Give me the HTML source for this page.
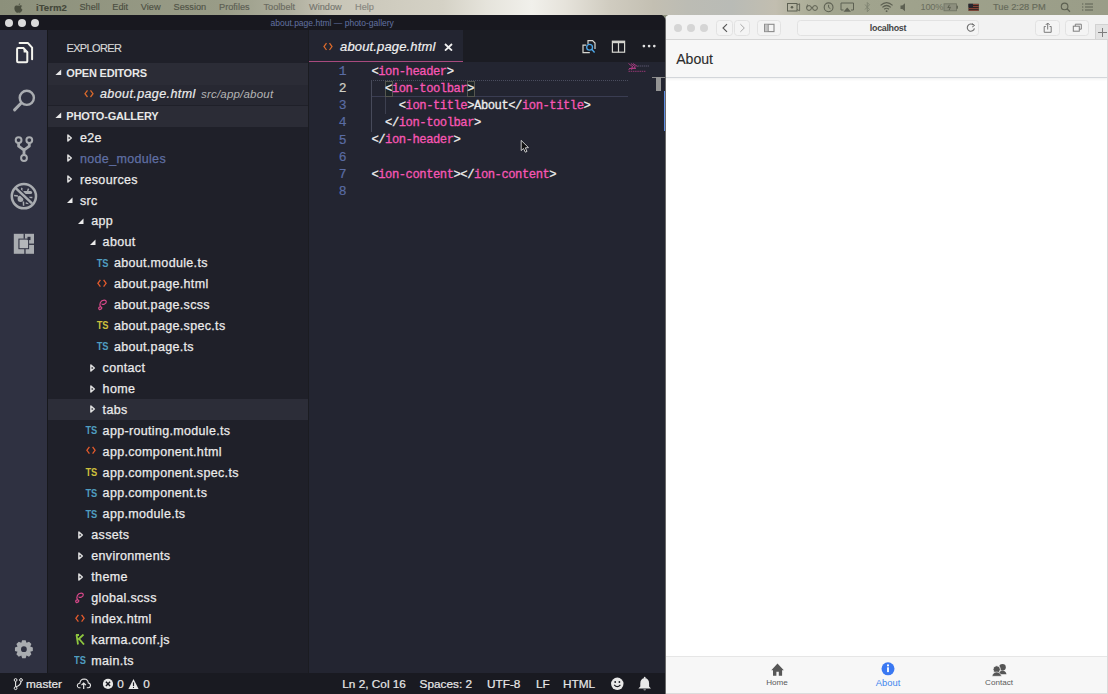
<!DOCTYPE html>
<html><head><meta charset="utf-8"><style>
*{margin:0;padding:0;box-sizing:border-box}
html,body{width:1108px;height:694px;overflow:hidden;background:#8e927f;font-family:"Liberation Sans",sans-serif}
.a{position:absolute}
#menubar{left:0;top:0;width:1108px;height:15px;background:linear-gradient(90deg,#8c907b 0%,#999c87 20%,#aeae9d 26%,#c8c5b7 30%,#d5d2c6 40%,#e6e4dc 44%,#f1f0eb 48%,#e6e3db 51%,#d0ccc0 55%,#c3bfb2 59%,#bcbcb4 62%,#b9bbb6 66%,#c2beb0 70%,#b2b29e 72%,#a2a58f 75%,#9ea18b 85%,#9a9d88 100%)}
#menubar span{position:absolute;top:1px;font-size:10px;color:#5b5e50;line-height:13px;-webkit-text-stroke:0.15px currentColor}
#vsc{left:0;top:15px;width:665px;height:679px;background:#1a1b22;border-top-right-radius:5px;overflow:hidden}
#title{left:0;top:15px;width:665px;height:15px;background:#18181f;border-top-right-radius:5px}
.tl{position:absolute;top:18.5px;width:8px;height:8px;border-radius:50%;background:#dadada}
#title .t{position:absolute;left:270.5px;top:2.3px;font-size:8.5px;color:#6272a2;line-height:12px;white-space:nowrap}
#act{left:0;top:30px;width:47px;height:643px;background:#2f3141}
#side{left:47px;top:30px;width:262px;height:643px;background:#1f2029}
#tabs{left:309px;top:30px;width:356px;height:32px;background:#1b1c23}
#editor{left:309px;top:62px;width:356px;height:611px;background:#232531}
#status{left:0;top:673px;width:665px;height:21px;background:#191a21}
.st{position:absolute;top:677px;line-height:14px;white-space:nowrap;color:#e8e8e8;font-size:11.8px;-webkit-text-stroke:0.2px currentColor}
#saf{left:665px;top:15px;width:443px;height:679px;background:#fff;border-top-left-radius:5px;overflow:hidden}
.row{position:absolute;left:47px;width:261px;height:21px}
.row.sel{background:#2c2d38}
.row .nm{position:absolute;top:3.8px;line-height:15px;font-size:12.5px;letter-spacing:0.33px;color:#ebebeb;white-space:nowrap;-webkit-text-stroke:0.25px currentColor}
.row .tw{position:absolute;top:6.5px}
.row .ts{position:absolute;top:6px;font-size:9.3px;font-weight:bold;line-height:11px;letter-spacing:-0.1px;transform:scaleY(1.18);transform-origin:0 50%}
.row .ic{position:absolute;top:5.5px}
.hdr{position:absolute;left:47px;width:261px;height:22px;background:#2b2c36}
.hdr b{position:absolute;left:19.3px;top:4px;font-size:11px;line-height:13px;color:#e8e8e8;letter-spacing:-0.2px}
.hdr svg{position:absolute;left:7.6px;top:6.3px}
.ln{position:absolute;left:308px;width:38.5px;text-align:right;height:17px;line-height:17px;font-family:"Liberation Mono",monospace;font-size:13px;-webkit-text-stroke:0.2px currentColor}
.code{position:absolute;left:371.4px;height:17px;line-height:17px;font-family:"Liberation Mono",monospace;font-size:12.2px;letter-spacing:-0.47px;white-space:pre;-webkit-text-stroke:0.3px currentColor}

</style></head><body>
<div id="menubar" class="a">
 <span style="left:36px;font-weight:bold;font-size:9.6px;color:#44483a">iTerm2</span>
 <span style="left:79.4px;font-size:9.2px;color:#4b4e41">Shell</span>
 <span style="left:112.3px;font-size:9.2px;color:#4b4e41">Edit</span>
 <span style="left:140.8px;font-size:9.2px;color:#4d5043">View</span>
 <span style="left:173.5px;font-size:9.2px;color:#515447">Session</span>
 <span style="left:219px;font-size:9.2px;color:#5c5e53">Profiles</span>
 <span style="left:263.5px;font-size:9.2px;color:#6a6b61">Toolbelt</span>
 <span style="left:309px;font-size:9.2px;color:#76766f">Window</span>
 <span style="left:355px;font-size:9.2px;color:#87867f">Help</span>
 <svg style="position:absolute;left:14px;top:2.5px" width="9" height="10" viewBox="0 0 9 10"><path d="M6.2 0.2 Q6.3 1.8 4.6 2.4 Q4.4 0.8 6.2 0.2 Z M4.5 2.8 Q3 2.1 1.8 2.6 Q0 3.5 0.4 6 Q0.8 8.6 2.4 9.6 Q3.2 10 4.4 9.4 Q5.4 9.9 6.4 9.6 Q7.6 8.9 8.5 6.8 Q7 6 7.1 4.6 Q7.2 3.4 8.2 3 Q7.2 2 5.9 2.4 Q5.1 2.7 4.5 2.8 Z" fill="#4b4f40"/></svg>
 <span style="left:992.9px;font-size:9.3px;color:#666a5a">Tue 2:28 PM</span>
</div>
<div id="vsc" class="a"></div>
<div id="title" class="a"><div class="t">about.page.html — photo-gallery</div></div>
<div class="tl" style="left:5px"></div><div class="tl" style="left:18px"></div><div class="tl" style="left:31px"></div>
<div id="act" class="a"></div>
<svg class="a" style="left:0;top:30px" width="47" height="643" viewBox="0 30 47 643">
<path d="M19.6 43.1 L28 43.1 L32.1 47.6 L32.1 59.3" fill="none" stroke="#f4f4ee" stroke-width="2" stroke-linejoin="round" stroke-linecap="round"/>
<path d="M18.3 48.1 L23.6 48.1 L27.3 52.2 L27.3 61.2 Q27.3 62.2 26.3 62.2 L18.1 62.2 Q17.1 62.2 17.1 61.2 L17.1 49.1 Q17.1 48.1 18.1 48.1 Z" fill="none" stroke="#f4f4ee" stroke-width="2" stroke-linejoin="round"/>
<path d="M23.3 47.2 L23.7 52.5 L28.3 52.5 Z" fill="#f4f4ee"/>
<circle cx="26.8" cy="97.8" r="7.1" fill="none" stroke="#a9acb0" stroke-width="2.4"/>
<path d="M21 103.3 L14.6 109.9" stroke="#a9acb0" stroke-width="3" stroke-linecap="round"/>
<circle cx="18.6" cy="140.1" r="2.9" fill="none" stroke="#a9acb0" stroke-width="2"/>
<circle cx="29.3" cy="140.1" r="2.9" fill="none" stroke="#a9acb0" stroke-width="2"/>
<circle cx="24.0" cy="158" r="2.9" fill="none" stroke="#a9acb0" stroke-width="2"/>
<path d="M18.6 143 L18.6 146.2 L24 150.2 L29.3 146.2 L29.3 143 M24 150.2 L24 155" fill="none" stroke="#a9acb0" stroke-width="2.8" stroke-linejoin="round"/>
<ellipse cx="20.5" cy="198.7" rx="2.9" ry="3.3" fill="#a9acb0"/>
<path d="M24.3 192.6 L30.6 192.6" stroke="#a9acb0" stroke-width="3" stroke-linecap="round"/>
<path d="M22 191 Q21.3 189.2 22 187.8 M27.6 191.3 Q27.9 189.8 28.6 188.6 M28.8 197.5 L32.4 197.6 M14.1 195.6 L18 195.9 M23.4 201.5 L23.6 205.8 M25.7 203.1 L28.7 203.5" fill="none" stroke="#a9acb0" stroke-width="1.5"/>
<path d="M15.2 187.7 L32 203.4" stroke="#2f3141" stroke-width="5"/>
<path d="M15.2 187.7 L32 203.4" stroke="#a9acb0" stroke-width="2.5"/>
<circle cx="23.9" cy="196.2" r="12.1" fill="none" stroke="#a9acb0" stroke-width="2.5"/>
<rect x="13.8" y="233.8" width="20.2" height="20" fill="#a9acb0"/>
<rect x="18.4" y="238.6" width="10.7" height="10.6" fill="#2f3141"/>
<rect x="19.5" y="239.6" width="8.6" height="8.6" fill="#b4b7ba"/>
<rect x="23.6" y="233.5" width="1.3" height="5.2" fill="#2f3141"/>
<rect x="24.3" y="249" width="1.3" height="5" fill="#2f3141"/>
<rect x="29" y="243.6" width="5.3" height="1.3" fill="#2f3141"/>
<rect x="27.5" y="236.8" width="3" height="3.3" fill="#2f3141"/>
<path d="M21.28 642.82 L22.18 640.26 L25.62 640.26 L26.52 642.82 L26.56 642.83 L29.00 641.67 L31.43 644.10 L30.27 646.54 L30.28 646.58 L32.84 647.48 L32.84 650.92 L30.28 651.82 L30.27 651.86 L31.43 654.30 L29.00 656.73 L26.56 655.57 L26.52 655.58 L25.62 658.14 L22.18 658.14 L21.28 655.58 L21.24 655.57 L18.80 656.73 L16.37 654.30 L17.53 651.86 L17.52 651.82 L14.96 650.92 L14.96 647.48 L17.52 646.58 L17.53 646.54 L16.37 644.10 L18.80 641.67 L21.24 642.83 Z M26.80 649.20 A2.9 2.9 0 1 0 21.00 649.20 A2.9 2.9 0 1 0 26.80 649.20 Z" fill="#a9acb0" fill-rule="evenodd"/>
</svg>
<div id="side" class="a"></div>
<div class="a" style="left:66.5px;top:41.6px;font-size:11px;line-height:13px;color:#d8d8d8;letter-spacing:-0.65px;-webkit-text-stroke:0.15px currentColor">EXPLORER</div>
<div class="hdr" style="top:63px"><svg width="7" height="7" viewBox="0 0 7 7"><path d="M6.2 0.4 L6.2 6 L0.4 6 Z" fill="#e8e8e8"/></svg><b>OPEN EDITORS</b></div>
<div class="a" style="left:47px;top:85px;width:261px;height:20px;background:#272832"></div>
<svg class="a" style="left:83.5px;top:89px" width="10" height="10" viewBox="0 0 10 10"><path d="M3.5 1.4 L1 4.7 L3.5 8 M6.5 1.4 L9 4.7 L6.5 8" fill="none" stroke="#db6a2c" stroke-width="1.25"/></svg>
<div class="a" style="left:100px;top:87px;font-size:12.5px;line-height:15px;font-style:italic;color:#ececec;letter-spacing:0.4px;white-space:nowrap;-webkit-text-stroke:0.2px currentColor">about.page.html</div>
<div class="a" style="left:201px;top:87.4px;font-size:11.5px;line-height:14px;font-style:italic;color:#b4b4b4;letter-spacing:0.2px;white-space:nowrap">src/app/about</div>
<div class="hdr" style="top:106px;height:21px"><svg width="7" height="7" viewBox="0 0 7 7"><path d="M6.2 0.4 L6.2 6 L0.4 6 Z" fill="#e8e8e8"/></svg><b>PHOTO-GALLERY</b></div>
<div class="row" style="top:127.00px">
<svg class="tw" style="left:20.0px" width="6" height="8" viewBox="0 0 6 8"><path d="M0.9 0.95 L4.3 4 L0.9 7.05 Z" fill="none" stroke="#dedede" stroke-width="1.5" stroke-linejoin="round"/></svg>
<span class="nm" style="left:33.0px">e2e</span></div>
<div class="row" style="top:147.92px">
<svg class="tw" style="left:20.0px" width="6" height="8" viewBox="0 0 6 8"><path d="M0.9 0.95 L4.3 4 L0.9 7.05 Z" fill="none" stroke="#dedede" stroke-width="1.5" stroke-linejoin="round"/></svg>
<span class="nm" style="left:33.0px;color:#5f6fa3">node_modules</span></div>
<div class="row" style="top:168.84px">
<svg class="tw" style="left:20.0px" width="6" height="8" viewBox="0 0 6 8"><path d="M0.9 0.95 L4.3 4 L0.9 7.05 Z" fill="none" stroke="#dedede" stroke-width="1.5" stroke-linejoin="round"/></svg>
<span class="nm" style="left:33.0px">resources</span></div>
<div class="row" style="top:189.76px">
<svg class="tw" style="left:19.0px" width="7" height="8" viewBox="0 0 7 8"><path d="M6.5 1.5 L6.5 7 L1 7 Z" fill="#ececec"/></svg>
<span class="nm" style="left:33.0px">src</span></div>
<div class="row" style="top:210.68px">
<svg class="tw" style="left:30.3px" width="7" height="8" viewBox="0 0 7 8"><path d="M6.5 1.5 L6.5 7 L1 7 Z" fill="#ececec"/></svg>
<span class="nm" style="left:44.3px">app</span></div>
<div class="row" style="top:231.60px">
<svg class="tw" style="left:41.6px" width="7" height="8" viewBox="0 0 7 8"><path d="M6.5 1.5 L6.5 7 L1 7 Z" fill="#ececec"/></svg>
<span class="nm" style="left:55.6px">about</span></div>
<div class="row" style="top:252.52px">
<span class="ts" style="left:49.7px;color:#4f9dc0">TS</span>
<span class="nm" style="left:66.9px">about.module.ts</span></div>
<div class="row" style="top:273.44px">
<svg class="ic" style="left:50.4px;top:5.6px" width="10" height="9" viewBox="0 0 10 9"><path d="M3.4 0.9 L0.9 4.3 L3.4 7.7 M6.6 0.9 L9.1 4.3 L6.6 7.7" fill="none" stroke="#e35a2c" stroke-width="1.3"/></svg>
<span class="nm" style="left:66.9px">about.page.html</span></div>
<div class="row" style="top:294.36px">
<svg class="ic" style="left:49.9px;top:4.5px" width="11" height="12" viewBox="0 0 11 12"><path d="M3.2 11 C1 10.2 1.2 7.6 3.6 7.8 C5.6 8 5 10.4 3 10.4 M3.6 7.8 C1.8 5 3.6 1.2 7.2 1.2 C9.8 1.2 10 3.8 7.6 5 C6 5.8 4.8 5.4 5 4.6" fill="none" stroke="#d9488a" stroke-width="1.2"/></svg>
<span class="nm" style="left:66.9px">about.page.scss</span></div>
<div class="row" style="top:315.28px">
<span class="ts" style="left:49.7px;color:#cdbf3c">TS</span>
<span class="nm" style="left:66.9px">about.page.spec.ts</span></div>
<div class="row" style="top:336.20px">
<span class="ts" style="left:49.7px;color:#4f9dc0">TS</span>
<span class="nm" style="left:66.9px">about.page.ts</span></div>
<div class="row" style="top:357.12px">
<svg class="tw" style="left:42.6px" width="6" height="8" viewBox="0 0 6 8"><path d="M0.9 0.95 L4.3 4 L0.9 7.05 Z" fill="none" stroke="#dedede" stroke-width="1.5" stroke-linejoin="round"/></svg>
<span class="nm" style="left:55.6px">contact</span></div>
<div class="row" style="top:378.04px">
<svg class="tw" style="left:42.6px" width="6" height="8" viewBox="0 0 6 8"><path d="M0.9 0.95 L4.3 4 L0.9 7.05 Z" fill="none" stroke="#dedede" stroke-width="1.5" stroke-linejoin="round"/></svg>
<span class="nm" style="left:55.6px">home</span></div>
<div class="row sel" style="top:398.96px">
<svg class="tw" style="left:42.6px" width="6" height="8" viewBox="0 0 6 8"><path d="M0.9 0.95 L4.3 4 L0.9 7.05 Z" fill="none" stroke="#dedede" stroke-width="1.5" stroke-linejoin="round"/></svg>
<span class="nm" style="left:55.6px">tabs</span></div>
<div class="row" style="top:419.88px">
<span class="ts" style="left:38.4px;color:#4f9dc0">TS</span>
<span class="nm" style="left:55.6px">app-routing.module.ts</span></div>
<div class="row" style="top:440.80px">
<svg class="ic" style="left:39.1px;top:5.6px" width="10" height="9" viewBox="0 0 10 9"><path d="M3.4 0.9 L0.9 4.3 L3.4 7.7 M6.6 0.9 L9.1 4.3 L6.6 7.7" fill="none" stroke="#e35a2c" stroke-width="1.3"/></svg>
<span class="nm" style="left:55.6px">app.component.html</span></div>
<div class="row" style="top:461.72px">
<span class="ts" style="left:38.4px;color:#cdbf3c">TS</span>
<span class="nm" style="left:55.6px">app.component.spec.ts</span></div>
<div class="row" style="top:482.64px">
<span class="ts" style="left:38.4px;color:#4f9dc0">TS</span>
<span class="nm" style="left:55.6px">app.component.ts</span></div>
<div class="row" style="top:503.56px">
<span class="ts" style="left:38.4px;color:#4f9dc0">TS</span>
<span class="nm" style="left:55.6px">app.module.ts</span></div>
<div class="row" style="top:524.48px">
<svg class="tw" style="left:31.3px" width="6" height="8" viewBox="0 0 6 8"><path d="M0.9 0.95 L4.3 4 L0.9 7.05 Z" fill="none" stroke="#dedede" stroke-width="1.5" stroke-linejoin="round"/></svg>
<span class="nm" style="left:44.3px">assets</span></div>
<div class="row" style="top:545.40px">
<svg class="tw" style="left:31.3px" width="6" height="8" viewBox="0 0 6 8"><path d="M0.9 0.95 L4.3 4 L0.9 7.05 Z" fill="none" stroke="#dedede" stroke-width="1.5" stroke-linejoin="round"/></svg>
<span class="nm" style="left:44.3px">environments</span></div>
<div class="row" style="top:566.32px">
<svg class="tw" style="left:31.3px" width="6" height="8" viewBox="0 0 6 8"><path d="M0.9 0.95 L4.3 4 L0.9 7.05 Z" fill="none" stroke="#dedede" stroke-width="1.5" stroke-linejoin="round"/></svg>
<span class="nm" style="left:44.3px">theme</span></div>
<div class="row" style="top:587.24px">
<svg class="ic" style="left:27.3px;top:4.5px" width="11" height="12" viewBox="0 0 11 12"><path d="M3.2 11 C1 10.2 1.2 7.6 3.6 7.8 C5.6 8 5 10.4 3 10.4 M3.6 7.8 C1.8 5 3.6 1.2 7.2 1.2 C9.8 1.2 10 3.8 7.6 5 C6 5.8 4.8 5.4 5 4.6" fill="none" stroke="#d9488a" stroke-width="1.2"/></svg>
<span class="nm" style="left:44.3px">global.scss</span></div>
<div class="row" style="top:608.16px">
<svg class="ic" style="left:27.8px;top:5.6px" width="10" height="9" viewBox="0 0 10 9"><path d="M3.4 0.9 L0.9 4.3 L3.4 7.7 M6.6 0.9 L9.1 4.3 L6.6 7.7" fill="none" stroke="#e35a2c" stroke-width="1.3"/></svg>
<span class="nm" style="left:44.3px">index.html</span></div>
<div class="row" style="top:629.08px">
<svg class="ic" style="left:28.3px;top:5px" width="10" height="11" viewBox="0 0 10 11"><path d="M1.5 0.5 L3 10.5 M3.2 5.5 L8.5 0.5 M4.2 5 L9 10.5 M1 1 L4 1" fill="none" stroke="#8ec63f" stroke-width="1.8"/></svg>
<span class="nm" style="left:44.3px">karma.conf.js</span></div>
<div class="row" style="top:650.00px">
<span class="ts" style="left:27.1px;color:#4f9dc0">TS</span>
<span class="nm" style="left:44.3px">main.ts</span></div>
<div class="a" style="left:47px;top:30px;width:1px;height:643px;background:#17181c"></div>
<div class="a" style="left:308px;top:30px;width:1px;height:643px;background:#1b1c21"></div>
<div id="tabs" class="a"></div>
<div id="editor" class="a"></div>
<div class="a" style="left:309px;top:30px;width:154px;height:32px;background:#232531;border-bottom:1px solid #a84a7e"></div>
<svg class="a" style="left:323px;top:42px" width="10" height="10" viewBox="0 0 10 10"><path d="M3.5 1.2 L1 4.6 L3.5 8 M6.5 1.2 L9 4.6 L6.5 8" fill="none" stroke="#db6a2c" stroke-width="1.25"/></svg>
<div class="a" style="left:340px;top:39px;font-size:13px;line-height:16px;font-style:italic;color:#f0f0f0;letter-spacing:0.15px;white-space:nowrap;-webkit-text-stroke:0.2px currentColor">about.page.html</div>
<svg class="a" style="left:444.2px;top:42.9px" width="9" height="8.5" viewBox="0 0 9 8.5"><path d="M1 1 L8 7.6 M8 1 L1 7.6" stroke="#f0f0f0" stroke-width="1.8"/></svg>
<div class="a" style="left:371px;top:80px;width:257px;height:17px;border-top:1.5px dotted #4a4d5e;border-bottom:1.5px solid #3a3d52"></div>
<div class="a" style="left:371px;top:97px;width:1px;height:35px;background:#474a5a"></div>
<div class="a" style="left:371px;top:80px;width:1px;height:17px;background:#474a5a"></div>
<div class="a" style="left:385px;top:97px;width:1px;height:17px;background:#3d4050"></div>
<div class="a" style="left:384.5px;top:80.5px;width:8px;height:16px;background:#1c2427;border:1px solid #55574f"></div>
<div class="a" style="left:467px;top:80.5px;width:8px;height:16px;background:#1c2427;border:1px solid #55574f"></div>
<div class="ln" style="top:62.70px;color:#5a6ca4">1</div>
<div class="code" style="top:63.60px"><span style="color:#eeeeee">&lt;</span><span style="color:#f756b4">ion-header</span><span style="color:#eeeeee">&gt;</span></div>
<div class="ln" style="top:79.90px;color:#cfcfc6">2</div>
<div class="code" style="top:80.80px"><span style="color:#eeeeee">  </span><span style="color:#eeeeee">&lt;</span><span style="color:#f756b4">ion-toolbar</span><span style="color:#eeeeee">&gt;</span></div>
<div class="ln" style="top:97.10px;color:#5a6ca4">3</div>
<div class="code" style="top:98.00px"><span style="color:#eeeeee">    </span><span style="color:#eeeeee">&lt;</span><span style="color:#f756b4">ion-title</span><span style="color:#eeeeee">&gt;About&lt;/</span><span style="color:#f756b4">ion-title</span><span style="color:#eeeeee">&gt;</span></div>
<div class="ln" style="top:114.30px;color:#5a6ca4">4</div>
<div class="code" style="top:115.20px"><span style="color:#eeeeee">  </span><span style="color:#eeeeee">&lt;/</span><span style="color:#f756b4">ion-toolbar</span><span style="color:#eeeeee">&gt;</span></div>
<div class="ln" style="top:131.50px;color:#5a6ca4">5</div>
<div class="code" style="top:132.40px"><span style="color:#eeeeee">&lt;/</span><span style="color:#f756b4">ion-header</span><span style="color:#eeeeee">&gt;</span></div>
<div class="ln" style="top:148.70px;color:#5a6ca4">6</div>
<div class="ln" style="top:165.90px;color:#5a6ca4">7</div>
<div class="code" style="top:166.80px"><span style="color:#eeeeee">&lt;</span><span style="color:#f756b4">ion-content</span><span style="color:#eeeeee">&gt;&lt;/</span><span style="color:#f756b4">ion-content</span><span style="color:#eeeeee">&gt;</span></div>
<div class="ln" style="top:183.10px;color:#5a6ca4">8</div>
<div id="status" class="a"></div>
<svg class="a" style="left:0;top:673px" width="665" height="21" viewBox="0 673 665 21">
<circle cx="15.6" cy="680" r="1.4" fill="none" stroke="#e8e8e8" stroke-width="1"/><circle cx="21" cy="680" r="1.4" fill="none" stroke="#e8e8e8" stroke-width="1"/><circle cx="15.6" cy="688.2" r="1.4" fill="none" stroke="#e8e8e8" stroke-width="1"/>
<path d="M15.6 681.4 L15.6 686.8 M21 681.4 Q21 685 16.2 686.8" fill="none" stroke="#e8e8e8" stroke-width="1.1"/>
<path d="M80.5 687.8 L78.8 687.8 Q77.2 687.5 77.3 685.4 Q77.6 683.3 79.8 683.3 Q80.3 679 84.2 679 Q88 679.2 88.3 683 Q90.6 683.3 90.5 685.6 Q90.2 687.7 88.5 687.8 L86.8 687.8" fill="none" stroke="#e8e8e8" stroke-width="1.1"/>
<path d="M83.7 689 L83.7 683 M81.5 685.2 L83.7 683 L85.9 685.2" fill="none" stroke="#e8e8e8" stroke-width="1.2"/>
<circle cx="108" cy="683.9" r="5.1" fill="#e8e8e8"/><path d="M105.9 681.8 L110.1 686 M110.1 681.8 L105.9 686" stroke="#191a21" stroke-width="1.5"/>
<path d="M133.5 679 L138.6 689 L128.4 689 Z" fill="#e8e8e8"/><path d="M133.5 682.3 L133.5 686" stroke="#191a21" stroke-width="1.2"/><circle cx="133.5" cy="687.4" r="0.6" fill="#191a21"/>
<circle cx="617.3" cy="683.8" r="6.2" fill="#e8e8e8"/><circle cx="615.2" cy="682" r="0.9" fill="#191a21"/><circle cx="619.4" cy="682" r="0.9" fill="#191a21"/><path d="M614.2 684.8 Q617.3 688.6 620.4 684.8" fill="none" stroke="#191a21" stroke-width="1.2"/>
<path d="M644.7 678 Q640.3 678.5 640.3 683.5 L640.3 686.5 L638.4 688.6 L651 688.6 L649.1 686.5 L649.1 683.5 Q649.1 678.5 644.7 678 Z" fill="#e8e8e8"/><path d="M643.3 689.4 Q644.7 691.2 646.1 689.4 Z" fill="#e8e8e8"/><circle cx="644.7" cy="677.6" r="0.9" fill="#e8e8e8"/>
</svg>
<div class="st" style="left:26px">master</div>
<div class="st" style="left:117.3px">0</div>
<div class="st" style="left:143.2px">0</div>
<div class="st" style="left:342.3px">Ln 2, Col 16</div>
<div class="st" style="left:419.6px">Spaces: 2</div>
<div class="st" style="left:487px">UTF-8</div>
<div class="st" style="left:536px">LF</div>
<div class="st" style="left:563px">HTML</div>
<div class="a" style="left:665px;top:15px;width:443px;height:679px;background:#fff;border-top-left-radius:5px;overflow:hidden">
<div class="a" style="left:0;top:0;width:443px;height:25px;background:#f2f2f2;border-bottom:1px solid #d8d8d8"></div>
<div class="a" style="left:0;top:25px;width:443px;height:38px;background:#f7f7f7;border-bottom:1px solid #d3d6da;box-shadow:0 1px 3px rgba(0,0,0,0.07)"></div>
<div class="a" style="left:0;top:641px;width:443px;height:38px;background:#f7f7f7;border-top:1px solid #e6e6e6;border-bottom:1px solid #dcdcdc"></div>
<div class="a" style="left:0;top:0;width:1px;height:679px;background:#6a6a6a"></div>
<div class="a" style="left:442px;top:25px;width:1px;height:654px;background:#dadada"></div>
</div>
<div class="a" style="left:673.8px;top:23.6px;width:8.4px;height:8.4px;border-radius:50%;background:#d5d5d5"></div>
<div class="a" style="left:686.8px;top:23.6px;width:8.4px;height:8.4px;border-radius:50%;background:#d5d5d5"></div>
<div class="a" style="left:699.9px;top:23.6px;width:8.4px;height:8.4px;border-radius:50%;background:#d5d5d5"></div>
<div class="a" style="left:716.3px;top:20.2px;width:17.2px;height:15.5px;border:1px solid #e2e2e2;border-radius:3.5px;background:#f4f4f4"></div>
<div class="a" style="left:733.6px;top:20.2px;width:16.6px;height:15.5px;border:1px solid #e2e2e2;border-radius:3.5px;background:#f4f4f4"></div>
<div class="a" style="left:757.3px;top:20.2px;width:23.9px;height:15.5px;border:1px solid #e2e2e2;border-radius:3.5px;background:#f4f4f4"></div>
<div class="a" style="left:797.2px;top:20.2px;width:181.4px;height:15.5px;border:1px solid #e2e2e2;border-radius:3.5px;background:#f4f4f4"></div>
<div class="a" style="left:1035px;top:20.2px;width:25.0px;height:15.5px;border:1px solid #e2e2e2;border-radius:3.5px;background:#f4f4f4"></div>
<div class="a" style="left:1064.6px;top:20.2px;width:24.8px;height:15.5px;border:1px solid #e2e2e2;border-radius:3.5px;background:#f4f4f4"></div>
<div class="a" style="left:1095px;top:24.3px;width:13px;height:15px;background:#e3e3e3;border-left:1px solid #d2d2d2;border-top:1px solid #d2d2d2"></div>
<svg class="a" style="left:665px;top:15px" width="443" height="25" viewBox="665 15 443 25">
<path d="M727 24.2 L723 28 L727 31.8" fill="none" stroke="#555" stroke-width="1.1"/>
<path d="M740.4 24.2 L744.3 28 L740.4 31.8" fill="none" stroke="#a8a8a8" stroke-width="1"/>
<rect x="764.6" y="24.3" width="9.4" height="7.3" fill="none" stroke="#8a8a8a" stroke-width="1.1"/>
<rect x="765" y="24.6" width="2.8" height="6.7" fill="#c5c5c5"/>
<path d="M768.2 24.3 L768.2 31.6" stroke="#8a8a8a" stroke-width="1"/>
<path d="M973.5 25.2 A3.6 3.6 0 1 0 974.4 28.4" fill="none" stroke="#6e6e6e" stroke-width="1.1"/>
<path d="M972 23.6 L974.6 25.4 L972.2 27" fill="none" stroke="#6e6e6e" stroke-width="1"/>
<path d="M1045.8 26.5 L1044.2 26.5 L1044.2 32.3 L1051.2 32.3 L1051.2 26.5 L1049.6 26.5 M1047.7 29.5 L1047.7 23 M1045.7 25 L1047.7 23 L1049.7 25" fill="none" stroke="#7a7a7a" stroke-width="1"/>
<rect x="1073.3" y="26.2" width="6" height="5" fill="none" stroke="#7f7f7f" stroke-width="1"/>
<path d="M1075.3 26.2 L1075.3 24.2 L1081.3 24.2 L1081.3 29.2 L1079.3 29.2" fill="none" stroke="#7f7f7f" stroke-width="1"/>
<path d="M1102.5 28 L1102.5 37 M1098 32.5 L1107 32.5" stroke="#7d7d7d" stroke-width="1"/>
</svg>
<div class="a" style="left:797px;top:23px;width:182px;text-align:center;font-size:8.9px;font-weight:bold;line-height:11px;color:#444;letter-spacing:-0.3px">localhost</div>
<div class="a" style="left:676.2px;top:51.2px;font-size:14.1px;line-height:16px;color:#2c2c2c;-webkit-text-stroke:0.12px currentColor">About</div>
<svg class="a" style="left:665px;top:656px" width="443" height="38" viewBox="665 656 443 38">
<path d="M777.5 663.6 L771.3 670.3 L773 670.3 L773 675.8 L776.4 675.8 L776.4 671.8 L778.8 671.8 L778.8 675.8 L782.1 675.8 L782.1 670.3 L783.8 670.3 Z" fill="#575757"/>
<circle cx="888" cy="668.8" r="6.5" fill="#3a78f2"/>
<rect x="887.1" y="667.3" width="1.8" height="4.8" fill="#fff"/><circle cx="888" cy="665.4" r="1.05" fill="#fff"/>
<circle cx="1002.5" cy="667.3" r="3.3" fill="#555"/>
<path d="M998 674.3 Q999.5 670.6 1002.5 670.6 Q1005.5 670.6 1006.5 674.3 Z" fill="#555"/>
<circle cx="996.7" cy="669.4" r="3.7" fill="#555" stroke="#f7f7f7" stroke-width="0.9"/>
<path d="M991.9 676.3 Q993.2 672 996.7 672 Q1000.2 672 1001.6 676.3 Z" fill="#555" stroke="#f7f7f7" stroke-width="0.6"/>
</svg>
<div class="a" style="left:752px;top:678px;width:50px;text-align:center;font-size:8.1px;line-height:10px;color:#5a5a5a">Home</div>
<div class="a" style="left:863px;top:677px;width:50px;text-align:center;font-size:9.4px;line-height:11px;color:#3f86ee">About</div>
<div class="a" style="left:974px;top:678px;width:50px;text-align:center;font-size:8.1px;line-height:10px;color:#5a5a5a">Contact</div>
<svg class="a" style="left:570px;top:30px" width="95" height="33" viewBox="570 30 95 33">
<path d="M586.3 45.2 L583 45.2 L583 52.6 L589.8 52.6" fill="none" stroke="#d6d6d0" stroke-width="1.2"/>
<path d="M588 44 L588 40.6 L592.6 40.6 L595 43 L595 49" fill="none" stroke="#d6d6d0" stroke-width="1.2"/>
<circle cx="589.6" cy="47.2" r="2.9" fill="none" stroke="#4fa8e8" stroke-width="1.3"/>
<path d="M591.7 49.3 L594.6 52.4" stroke="#4fa8e8" stroke-width="1.4"/>
<rect x="612.4" y="41.2" width="12.2" height="11" fill="none" stroke="#d6d6d0" stroke-width="1.2"/>
<rect x="612.4" y="41.2" width="12.2" height="2" fill="#d6d6d0"/>
<path d="M618.5 41.5 L618.5 52.2" stroke="#d6d6d0" stroke-width="1.2"/>
<circle cx="643.9" cy="46.1" r="1.35" fill="#e0e0e0"/>
<circle cx="649.1" cy="46.1" r="1.35" fill="#e0e0e0"/>
<circle cx="654.3" cy="46.1" r="1.35" fill="#e0e0e0"/>
</svg>
<svg class="a" style="left:626px;top:62px" width="30" height="12" viewBox="626 62 30 12">
<path d="M628.5 63.5 L633 67 L628.5 69.5 M631 63.5 L635.5 67 L631 69.5 M633 63.5 L637.5 66.5 M629 68.5 L636 68.5" fill="none" stroke="#b03c84" stroke-width="0.9"/>
<path d="M637.5 66 L649 66" stroke="#5e5a72" stroke-width="0.9" stroke-dasharray="1.5 0.6"/>
<path d="M628.5 71.3 L645.5 71.3" stroke="#a03a7c" stroke-width="0.9" stroke-dasharray="1.5 0.7"/>
</svg>
<div class="a" style="left:652px;top:76.5px;width:13px;height:1.5px;background:#8a8a8a"></div>
<div class="a" style="left:656px;top:77px;width:5px;height:13.5px;background:#949494"></div>
<div class="a" style="left:664px;top:91px;width:1.2px;height:40px;background:#5e8ee6"></div>
<svg class="a" style="left:519px;top:139px" width="12" height="16" viewBox="519 139 12 16">
<path d="M521.2 140.4 L521.2 150.6 L523.5 148.5 L525.3 152.2 L527 151.4 L525.3 147.8 L528.5 147.6 Z" fill="#111" stroke="#d8d8d8" stroke-width="0.9" stroke-linejoin="round"/>
</svg>
<svg class="a" style="left:770px;top:0" width="338" height="15" viewBox="770 0 338 15">
<rect x="787.5" y="3.5" width="9.5" height="7.5" fill="none" stroke="#5d6052" stroke-width="1"/><circle cx="792" cy="7.2" r="1.3" fill="#5d6052"/><path d="M797 5 L799.6 3.8 L799.6 10.8 L797 9.5" fill="none" stroke="#5d6052" stroke-width="0.9"/>
<circle cx="809" cy="8" r="2.4" fill="none" stroke="#5d6052" stroke-width="1"/><circle cx="815" cy="8" r="2.4" fill="none" stroke="#5d6052" stroke-width="1"/><path d="M811.4 7.5 L812.6 7.5 M806.7 7.5 L807.5 4.5" stroke="#5d6052" stroke-width="0.9"/>
<circle cx="828.6" cy="7.3" r="4.4" fill="none" stroke="#5d6052" stroke-width="1.1"/><path d="M828.6 4.8 L828.6 7.4 L830.4 8.6" fill="none" stroke="#5d6052" stroke-width="1"/>
<path d="M843.5 10 L841 10 L841 3 L853.5 3 L853.5 10 L851 10" fill="none" stroke="#5d6052" stroke-width="1"/><path d="M847.2 7.5 L843.5 11.8 L851 11.8 Z" fill="#5d6052"/>
<path d="M865 4.5 L869.5 9.5 L867.3 11.8 L867.3 2.5 L869.5 4.8 L865 9.5" fill="none" stroke="#7e8270" stroke-width="0.9"/>
<path d="M880.6 5.4 Q886.6 0 892.6 5.4 M882.4 7.4 Q886.6 3.6 890.8 7.4 M884.2 9.3 Q886.6 7.2 889 9.3" fill="none" stroke="#5d6052" stroke-width="1.2"/><circle cx="886.6" cy="11.2" r="0.9" fill="#5d6052"/>
<path d="M900.5 5.6 L902.3 5.6 L905 3.3 L905 11.3 L902.3 9 L900.5 9 Z" fill="#5d6052"/>
<rect x="944" y="3.8" width="12.5" height="7" fill="#8d8f7e" stroke="#6f7262" stroke-width="0.8"/><rect x="956.6" y="5.7" width="1.3" height="3" fill="#5d6052"/><path d="M949.5 4.8 L947.8 7.6 L950.4 7.2 L949.2 10" fill="none" stroke="#5a5d4e" stroke-width="0.9"/>
<rect x="968.5" y="3.8" width="10.3" height="7" fill="#2e2422"/><rect x="968.5" y="3.8" width="4.5" height="3.5" fill="#262630"/><path d="M973 4.5 L978.8 4.5 M973 6.5 L978.8 6.5 M968.5 8.5 L978.8 8.5 M968.5 10.3 L978.8 10.3" stroke="#9a4a3a" stroke-width="0.8"/>
<circle cx="1064.6" cy="6.4" r="3.3" fill="none" stroke="#5d6052" stroke-width="1.1"/><path d="M1067 8.8 L1070 11.8" stroke="#5d6052" stroke-width="1.3"/>
<path d="M1085 4 L1093 4 M1085 7 L1093 7 M1085 10 L1093 10 M1082 4 L1083.3 4 M1082 7 L1083.3 7 M1082 10 L1083.3 10" stroke="#5d6052" stroke-width="1"/>
</svg>
<div class="a" style="left:920.5px;top:1px;font-size:9.2px;line-height:12px;color:#6a6d5e;white-space:nowrap;letter-spacing:-0.2px">100%</div>
</body></html>
